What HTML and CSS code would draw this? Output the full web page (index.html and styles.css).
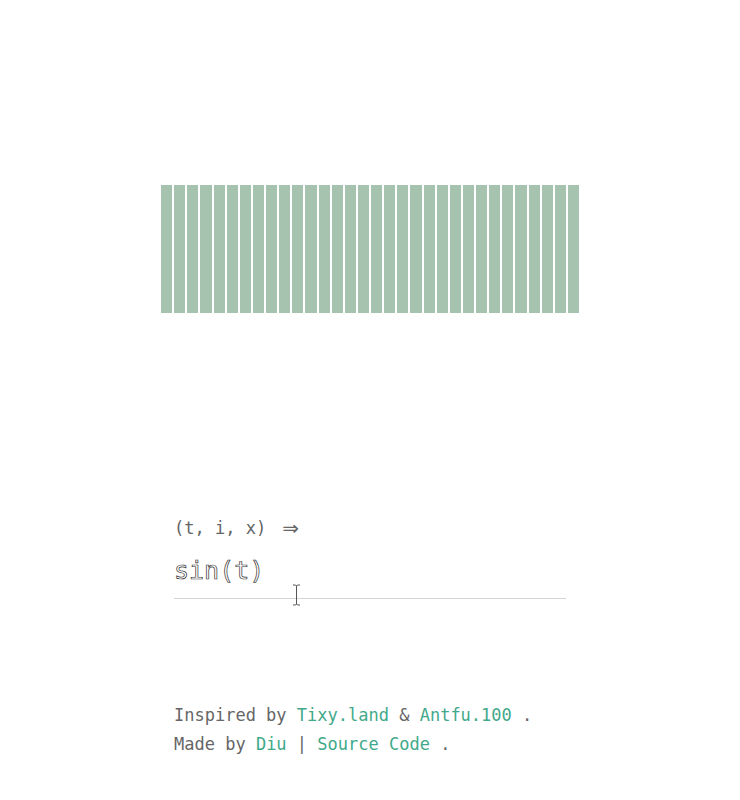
FILE: index.html
```html
<!DOCTYPE html>
<html lang="en">
<head>
<meta charset="utf-8">
<title>tixy</title>
<link rel="stylesheet" href="styles.css">
</head>
<body>
<main class="page">
  <div class="stage" id="stage"></div>
  <section class="editor">
    <div class="params">(t, i, x) <span class="arrow">⇒</span></div>
    <div class="input-wrap">
      <div class="input">sin(t)</div>
      <svg class="cursor" width="9" height="22" viewBox="0 0 9 22"><path d="M1 1h2.5l1 1 1-1H8M4.5 2v18M1 21h2.5l1-1 1 1H8" fill="none" stroke="#555" stroke-width="1"/></svg>
    </div>
  </section>
  <footer class="footer">
    <p>Inspired by <a href="#">Tixy.land</a> &amp; <a href="#">Antfu.100</a> .</p>
    <p>Made by <a href="#">Diu</a> | <a href="#">Source Code</a> .</p>
  </footer>
</main>
<script>
  var s = document.getElementById('stage');
  for (var k = 0; k < 32; k++) { var d = document.createElement('div'); d.className = 'bar'; s.appendChild(d); }
</script>
</body>
</html>
```
FILE: styles.css
```css
html, body { margin: 0; padding: 0; background: #fff; }
body { font-family: "DejaVu Sans Mono", "Liberation Mono", monospace; color: #666; }
.page { display: flex; flex-direction: column; align-items: center; }
.stage { margin-top: 185px; width: 418px; height: 128px; display: flex; gap: 2px; }
.bar { flex: 1; background: #a6c3b0; }
.editor { width: 392px; margin-top: 203px; }
.params { font-size: 17px; line-height: 24px; color: #666; }
.arrow { margin-left: 6px; font-family: "DejaVu Sans", sans-serif; font-size: 20px; line-height: 24px; vertical-align: top; }
.input-wrap { position: relative; margin-top: 15px; padding-bottom: 11px; border-bottom: 1px solid #d4d4d4; }
.input { font-size: 25px; line-height: 32px; color: #fff; -webkit-text-stroke: 0.7px #333; }
.cursor { position: absolute; left: 118px; top: 29px; }
.footer { width: 392px; margin-top: 102px; font-size: 17px; line-height: 29px; }
.footer p { margin: 0; }
.footer a { color: #3fa98a; text-decoration: none; }
```
